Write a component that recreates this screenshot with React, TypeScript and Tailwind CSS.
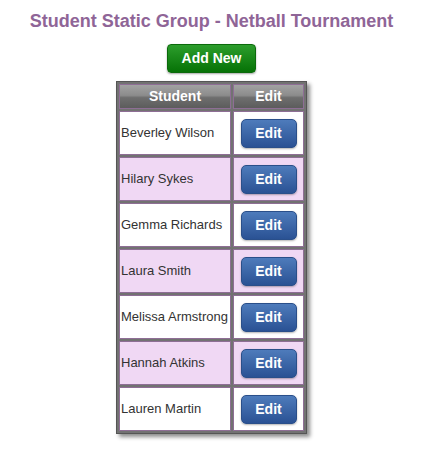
const students = [
  'Beverley Wilson',
  'Hilary Sykes',
  'Gemma Richards',
  'Laura Smith',
  'Melissa Armstrong',
  'Hannah Atkins',
  'Lauren Martin',
]

export default function App() {
  return (
    <div className="min-h-screen bg-white font-['Liberation_Sans',Arial,sans-serif]">
      <div className="w-[423px] flex flex-col items-center">
        <h1 className="pt-[11px] text-[18px] leading-[21px] font-bold text-[#8f6597]">
          Student Static Group - Netball Tournament
        </h1>

        <button
          type="button"
          className="mt-[12px] h-[29px] w-[89px] rounded-[4px] border border-[#0b6a0b] bg-[linear-gradient(to_bottom,#2c9d2c,#067206)] text-[14px] font-bold text-white shadow-[0_1px_2px_rgba(0,0,0,0.35)]"
        >
          Add New
        </button>

        <table className="mt-[8px] border-separate border-spacing-[2px] border border-[#555] bg-[#727272] shadow-[3px_3px_4px_rgba(0,0,0,0.45)]">
          <thead>
            <tr>
              <th className="border border-[#8e6e95] p-0 bg-[linear-gradient(to_bottom,#a2a2a2_0%,#8c8c8c_45%,#6e6e6e_55%,#5c5c5c_100%)]">
                <div className="flex h-[23px] w-[110px] items-center justify-center text-[14px] font-bold text-white">
                  Student
                </div>
              </th>
              <th className="border border-[#8e6e95] p-0 bg-[linear-gradient(to_bottom,#a2a2a2_0%,#8c8c8c_45%,#6e6e6e_55%,#5c5c5c_100%)]">
                <div className="flex h-[23px] w-[69px] items-center justify-center text-[14px] font-bold text-white">
                  Edit
                </div>
              </th>
            </tr>
          </thead>
          <tbody>
            {students.map((name, i) => (
              <tr key={name}>
                <td className={`border border-[#8e6e95] p-0 ${i % 2 === 1 ? 'bg-[#f0d8f4]' : 'bg-white'}`}>
                  <div className="flex h-[42px] w-[110px] items-center whitespace-nowrap pl-[1px] text-[13px] text-[#333]">
                    {name}
                  </div>
                </td>
                <td className={`border border-[#8e6e95] p-0 ${i % 2 === 1 ? 'bg-[#f0d8f4]' : 'bg-white'}`}>
                  <div className="flex h-[42px] w-[69px] items-center justify-center">
                    <button
                      type="button"
                      className="h-[29px] w-[56px] rounded-[5px] border border-[#2a4f8a] bg-[linear-gradient(to_bottom,#4e7bbb,#2a5294)] text-[14px] font-bold text-white shadow-[0_1px_2px_rgba(0,0,0,0.3)]"
                    >
                      Edit
                    </button>
                  </div>
                </td>
              </tr>
            ))}
          </tbody>
        </table>
      </div>
    </div>
  )
}
